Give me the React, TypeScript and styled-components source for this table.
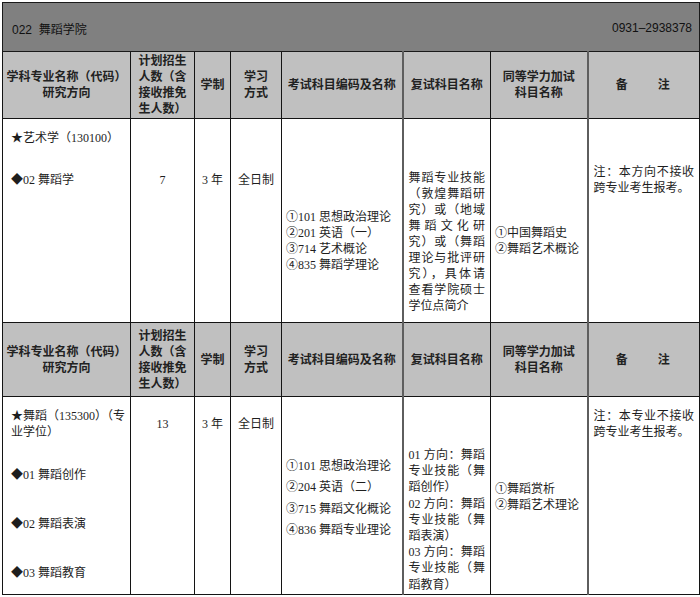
import styled, { createGlobalStyle } from 'styled-components';

const GlobalStyle = createGlobalStyle`
  body {
    margin: 0;
    background: #ffffff;
  }
`;

const sans = `"Liberation Sans", "Noto Sans CJK SC", sans-serif`;
const serif = `"Liberation Serif", "Noto Sans CJK SC", serif`;

const Wrap = styled.div`
  padding: 2px 0 0 2px;
`;

const Tabela = styled.table`
  width: 697px;
  border-collapse: collapse;
  table-layout: fixed;
  font-family: ${serif};
  font-size: 12px;
  color: #1e1e1e;
`;

const Linha = styled.tr<{ $h: number }>`
  height: ${({ $h }) => $h}px;
`;

const TitleCell = styled.td`
  background: #808080;
  border: 1px solid #1a1a1a;
  padding: 0 7px 0 9px;
  font-family: ${sans};
  font-size: 12px;
  color: #111;
`;

const TitleBar = styled.div`
  display: flex;
  justify-content: space-between;
  align-items: center;
  padding-top: 2px;
`;

const HeadCell = styled.th<{ $line?: string; $lw?: number }>`
  background: #c0c0c0;
  border: 1px solid #141414;
  border-right: ${({ $lw }) => $lw ?? 1}px solid ${({ $line }) => $line ?? '#141414'};
  font-family: ${sans};
  font-weight: bold;
  font-size: 12px;
  line-height: 16px;
  color: #222;
  text-align: center;
  vertical-align: middle;
  padding: 0 2px;
`;

const Spaced = styled.span`
  letter-spacing: 2px;
`;

const BodyCell = styled.td<{ $pt: number; $align?: string; $lh?: number; $line?: string; $lw?: number; $px?: number }>`
  border: 1px solid #141414;
  border-right: ${({ $lw }) => $lw ?? 1}px solid ${({ $line }) => $line ?? '#141414'};
  vertical-align: top;
  padding: ${({ $pt }) => $pt}px ${({ $px }) => $px ?? 5}px 0;
  text-align: ${({ $align }) => $align ?? 'left'};
  line-height: ${({ $lh }) => $lh ?? 16}px;
  overflow: hidden;
`;

const Item = styled.div<{ $mt?: number }>`
  margin-top: ${({ $mt }) => $mt ?? 0}px;
`;

const JustLine = styled.div<{ $last?: boolean }>`
  text-align: justify;
  text-align-last: ${({ $last }) => ($last ? 'left' : 'justify')};
  white-space: nowrap;
`;

const GRAY = '#5e5e5e';

type Line = { t: string; last?: boolean };

const Lines = ({ lines }: { lines: Line[] }) => (
  <>
    {lines.map((l, i) => (
      <JustLine key={i} $last={l.last}>
        {l.t}
      </JustLine>
    ))}
  </>
);

const Header = ({ h }: { h: number }) => (
  <Linha $h={h}>
    <HeadCell>
      学科专业名称（代码）
      <br />
      研究方向
    </HeadCell>
    <HeadCell>
      计划招生
      <br />
      人数（含
      <br />
      接收推免
      <br />
      生人数）
    </HeadCell>
    <HeadCell>学制</HeadCell>
    <HeadCell>
      学习
      <br />
      方式
    </HeadCell>
    <HeadCell $line={GRAY} $lw={2}>
      考试科目编码及名称
    </HeadCell>
    <HeadCell>复试科目名称</HeadCell>
    <HeadCell $line={GRAY} $lw={2}>
      同等学力加试
      <br />
      科目名称
    </HeadCell>
    <HeadCell>
      <Spaced>备　　注</Spaced>
    </HeadCell>
  </Linha>
);

const retest1: Line[] = [
  { t: '舞蹈专业技能' },
  { t: '（敦煌舞蹈研' },
  { t: '究）或（地域' },
  { t: '舞蹈文化研' },
  { t: '究）或（舞蹈' },
  { t: '理论与批评研' },
  { t: '究），具体请' },
  { t: '查看学院硕士' },
  { t: '学位点简介', last: true },
];

const retest2: Line[] = [
  { t: '01 方向：舞蹈' },
  { t: '专业技能（舞' },
  { t: '蹈创作）', last: true },
  { t: '02 方向：舞蹈' },
  { t: '专业技能（舞' },
  { t: '蹈表演）', last: true },
  { t: '03 方向：舞蹈' },
  { t: '专业技能（舞' },
  { t: '蹈教育）', last: true },
];

export default function App() {
  return (
    <Wrap>
      <GlobalStyle />
      <Tabela>
        <colgroup>
          <col style={{ width: 128 }} />
          <col style={{ width: 64 }} />
          <col style={{ width: 36 }} />
          <col style={{ width: 51 }} />
          <col style={{ width: 121 }} />
          <col style={{ width: 88 }} />
          <col style={{ width: 97 }} />
          <col style={{ width: 112 }} />
        </colgroup>
        <tbody>
          <Linha $h={49}>
            <TitleCell colSpan={8}>
              <TitleBar>
                <span>022&nbsp; 舞蹈学院</span>
                <span>0931–2938378</span>
              </TitleBar>
            </TitleCell>
          </Linha>

          <Header h={67} />

          <Linha $h={204}>
            <BodyCell $pt={11} $px={8}>
              <Item>★艺术学（130100）</Item>
              <Item $mt={26}>◆02 舞蹈学</Item>
            </BodyCell>
            <BodyCell $pt={53} $align="center">7</BodyCell>
            <BodyCell $pt={53} $align="center" $px={2}>3 年</BodyCell>
            <BodyCell $pt={53} $align="center" $px={2}>全日制</BodyCell>
            <BodyCell $pt={90} $line={GRAY} $lw={2} $px={4}>
              <div>①101 思想政治理论</div>
              <div>②201 英语（一）</div>
              <div>③714 艺术概论</div>
              <div>④835 舞蹈学理论</div>
            </BodyCell>
            <BodyCell $pt={51} $px={5}>
              <Lines lines={retest1} />
            </BodyCell>
            <BodyCell $pt={106} $line={GRAY} $lw={2} $px={4}>
              <div>①中国舞蹈史</div>
              <div>②舞蹈艺术概论</div>
            </BodyCell>
            <BodyCell $pt={45} $px={5}>
              <Lines lines={[{ t: '注：本方向不接收' }, { t: '跨专业考生报考。', last: true }]} />
            </BodyCell>
          </Linha>

          <Header h={74} />

          <Linha $h={198}>
            <BodyCell $pt={11} $px={8}>
              <Lines lines={[{ t: '★舞蹈（135300）（专' }, { t: '业学位）', last: true }]} />
              <Item $mt={27}>◆01 舞蹈创作</Item>
              <Item $mt={33}>◆02 舞蹈表演</Item>
              <Item $mt={33}>◆03 舞蹈教育</Item>
            </BodyCell>
            <BodyCell $pt={19} $align="center">13</BodyCell>
            <BodyCell $pt={19} $align="center" $px={2}>3 年</BodyCell>
            <BodyCell $pt={19} $align="center" $px={2}>全日制</BodyCell>
            <BodyCell $pt={59} $lh={21.4} $line={GRAY} $lw={2} $px={4}>
              <div>①101 思想政治理论</div>
              <div>②204 英语（二）</div>
              <div>③715 舞蹈文化概论</div>
              <div>④836 舞蹈专业理论</div>
            </BodyCell>
            <BodyCell $pt={50} $lh={16.2} $px={5}>
              <Lines lines={retest2} />
            </BodyCell>
            <BodyCell $pt={84} $line={GRAY} $lw={2} $px={4}>
              <div>①舞蹈赏析</div>
              <div>②舞蹈艺术理论</div>
            </BodyCell>
            <BodyCell $pt={11} $px={5}>
              <Lines lines={[{ t: '注：本专业不接收' }, { t: '跨专业考生报考。', last: true }]} />
            </BodyCell>
          </Linha>
        </tbody>
      </Tabela>
    </Wrap>
  );
}
